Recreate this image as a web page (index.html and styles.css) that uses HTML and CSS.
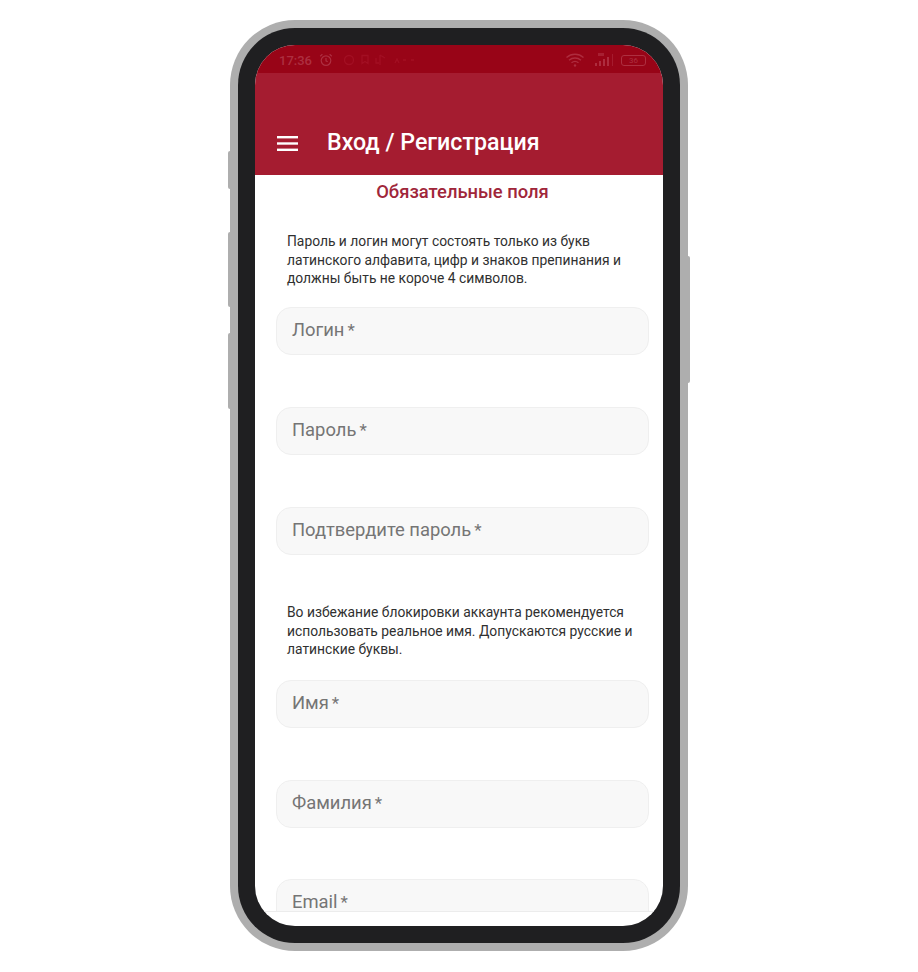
FILE: index.html
```html
<!DOCTYPE html>
<html lang="ru">
<head>
<meta charset="utf-8">
<title>Вход / Регистрация</title>
<link rel="stylesheet" href="styles.css">
</head>
<body>
<div class="phone">
  <span class="side side-l1"></span>
  <span class="side side-l2"></span>
  <span class="side side-l3"></span>
  <span class="side side-r"></span>
  <div class="bezel">
    <div class="screen">
      <div class="status">
        <span class="time">17:36</span>
        <svg class="alarm" width="14" height="14" viewBox="0 0 14 14" fill="none" stroke="#ad2f40" stroke-width="1.2"><circle cx="7" cy="7.6" r="4.8"/><path d="M7 5v2.8l1.7 1M1.2 3.2 3.4 1.3M12.8 3.2 10.6 1.300"/></svg>
        <svg class="faint" width="74" height="12" viewBox="0 0 74 12" fill="none" stroke="#a20f23" stroke-width="1.300"><circle cx="6" cy="6" r="4.500"/><path d="M19 1.500h6v8l-3-2-3 2zM37 1v10M37 1l5 3M36 9h-3v-5M52 9l2-4 2 4M60 6h3M68 6h3"/></svg>
        <span class="spacer"></span>
        <svg class="wifi" width="20" height="16" viewBox="0 0 20 16" fill="none" stroke="#ae2c3e" stroke-width="1.400"><path d="M1.500 5.500c5-4.400 12-4.400 17 0M4 8.200c3.500-3 8.500-3 12 0M6.500 10.800c2-1.600 5-1.600 7 0"/><circle cx="10" cy="13.500" r="1.200" fill="#ae2c3e" stroke="none"/></svg>
        <svg class="signal" width="22" height="16" viewBox="0 0 22 16" fill="#ae2c3e"><rect x="1" y="11" width="2" height="3"/><rect x="5" y="9" width="2" height="5"/><rect x="9" y="7" width="2" height="7"/><rect x="13" y="5" width="2" height="9"/><rect x="18" y="2" width="1" height="12" opacity=".6"/><rect x="4" y="1" width="6" height="3" opacity=".7"/></svg>
        <span class="battery">36</span>
      </div>
      <header class="appbar">
        <svg class="menu" width="21" height="15" viewBox="0 0 21 15" fill="#fff"><rect y="0" width="21" height="2.400"/><rect y="6.300" width="21" height="2.400"/><rect y="12.600" width="21" height="2.400"/></svg>
        <h1 class="title">Вход / Регистрация</h1>
      </header>
      <main class="content">
        <h2 class="heading">Обязательные поля</h2>
        <p class="note note-first">Пароль и логин могут состоять только из букв латинского алфавита, цифр и знаков препинания и должны быть не короче 4 символов.</p>
        <div class="field">Логин<span class="req">*</span></div>
        <div class="field">Пароль<span class="req">*</span></div>
        <div class="field field-last">Подтвердите пароль<span class="req">*</span></div>
        <p class="note note-second">Во избежание блокировки аккаунта рекомендуется использовать реальное имя. Допускаются русские и латинские буквы.</p>
        <div class="field">Имя<span class="req">*</span></div>
        <div class="field field-tight">Фамилия<span class="req">*</span></div>
        <div class="field">Email<span class="req">*</span></div>
      </main>
    </div>
  </div>
</div>
</body>
</html>
```
FILE: styles.css
```css
* { box-sizing: border-box; }
html, body { margin: 0; height: 100%; background: #fff; }
body {
  display: flex;
  justify-content: center;
  padding-top: 20px;
  font-family: Roboto, "Noto Sans", sans-serif;
}
.phone {
  position: relative;
  width: 458px;
  height: 931px;
  padding: 8px;
  background: #aeaeae;
  border-radius: 65px;
}
.side {
  position: absolute;
  width: 4px;
  background: #aeaeae;
  border-radius: 2px;
}
.side-l1 { left: -2px; top: 131px; height: 38px; }
.side-l2 { left: -2px; top: 212px; height: 75px; }
.side-l3 { left: -2px; top: 313px; height: 76px; }
.side-r { right: -2px; top: 236px; height: 127px; }
.bezel {
  height: 915px;
  padding: 17px;
  background: #1f1f21;
  border-radius: 57px;
}
.screen {
  height: 881px;
  display: flex;
  flex-direction: column;
  overflow: hidden;
  background: #fff;
  border-radius: 40px;
}
.status {
  flex: none;
  height: 28px;
  display: flex;
  align-items: center;
  padding: 2px 17px 0 24px;
  background: #980417;
}
.time { color: #ad2f40; font-size: 13px; font-weight: 500; }
.alarm { margin-left: 7px; }
.faint { margin-left: 10px; }
.spacer { flex: 1; }
.wifi { margin-right: 9.5px; }
.signal { margin-right: 5px; }
.battery {
  width: 25px;
  height: 11px;
  border: 1px solid #ad2f40;
  border-radius: 3px;
  color: #ad2f40;
  font-size: 8px;
  line-height: 9px;
  text-align: center;
}
.appbar {
  flex: none;
  height: 102px;
  display: flex;
  align-items: flex-end;
  padding: 0 0 19px 22px;
  background: #a51c30;
}
.menu { margin-bottom: 5px; }
.title {
  margin: 0 0 0 29px;
  color: #fff;
  font-size: 23.2px;
  font-weight: 500;
  line-height: 28px;
}
.content {
  flex: none;
  height: 737px;
  overflow: hidden;
  border-bottom: 1px solid #ececec;
  padding: 0 14px 0 21px;
}
.heading {
  margin: 6px 0 0;
  color: #a0263a;
  font-size: 18.4px;
  font-weight: 500;
  line-height: 22px;
  text-align: center;
}
.note {
  margin: 0;
  padding: 0 12px 0 11px;
  color: #303030;
  font-size: 13.83px;
  line-height: 18.5px;
}
.note-first { margin-top: 29px; margin-bottom: 19.5px; }
.note-second { margin-bottom: 21.5px; }
.field {
  height: 48px;
  margin-bottom: 52px;
  padding: 0 15px;
  background: #f8f8f8;
  border: 1px solid #efefef;
  border-radius: 15px;
  color: #757575;
  font-size: 18.4px;
  line-height: 44px;
}
.field-last { margin-bottom: 48px; }
.field-tight { margin-bottom: 51px; }
.req { margin-left: 3px; font-size: 17px; }
```
